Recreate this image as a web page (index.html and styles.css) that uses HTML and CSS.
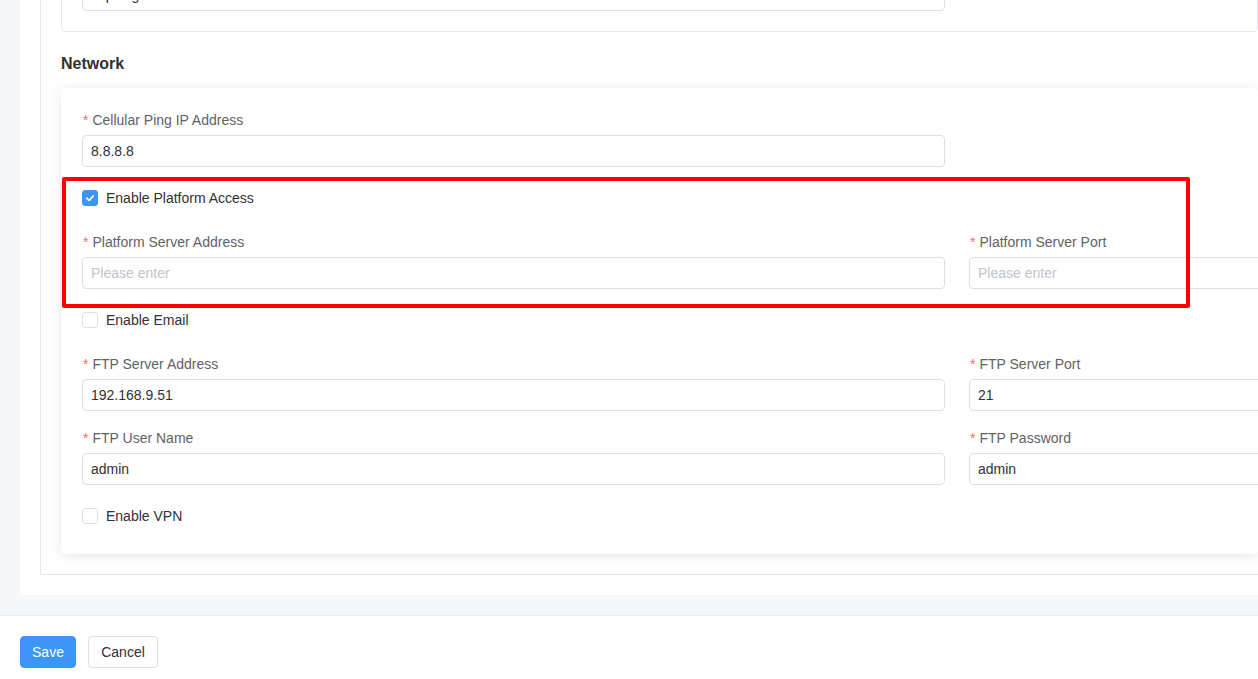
FILE: index.html
```html
<!DOCTYPE html>
<html lang="en">
<head>
<meta charset="utf-8">
<title>Network Settings</title>
<link rel="stylesheet" href="styles.css">
</head>
<body>
<div class="panel">
  <div class="container">
    <div class="card card-bordered">
      <div class="input"><span class="value">Top-Right</span></div>
    </div>

    <h3 class="section-title">Network</h3>

    <div class="card card-shadow">
      <div class="grid">
        <div class="item">
          <label class="label"><span class="req">*</span>Cellular Ping IP Address</label>
          <div class="input"><span class="value">8.8.8.8</span></div>
        </div>
        <div class="item empty"></div>

        <div class="check-row">
          <span class="checkbox checked">
            <svg viewBox="0 0 16 16" width="16" height="16"><path d="M4.2 8.2 L7 10.8 L11.8 5.6" fill="none" stroke="#fff" stroke-width="1.8" stroke-linecap="round" stroke-linejoin="round"/></svg>
          </span>
          <span class="check-label">Enable Platform Access</span>
        </div>

        <div class="item">
          <label class="label"><span class="req">*</span>Platform Server Address</label>
          <div class="input"><span class="placeholder">Please enter</span></div>
        </div>
        <div class="item">
          <label class="label"><span class="req">*</span>Platform Server Port</label>
          <div class="input"><span class="placeholder">Please enter</span></div>
        </div>

        <div class="check-row">
          <span class="checkbox"></span>
          <span class="check-label">Enable Email</span>
        </div>

        <div class="item">
          <label class="label"><span class="req">*</span>FTP Server Address</label>
          <div class="input"><span class="value">192.168.9.51</span></div>
        </div>
        <div class="item">
          <label class="label"><span class="req">*</span>FTP Server Port</label>
          <div class="input"><span class="value">21</span></div>
        </div>

        <div class="item">
          <label class="label"><span class="req">*</span>FTP User Name</label>
          <div class="input"><span class="value">admin</span></div>
        </div>
        <div class="item">
          <label class="label"><span class="req">*</span>FTP Password</label>
          <div class="input"><span class="value">admin</span></div>
        </div>

        <div class="check-row last">
          <span class="checkbox"></span>
          <span class="check-label">Enable VPN</span>
        </div>
      </div>
      <div class="highlight"></div>
    </div>
  </div>
</div>

<div class="footer">
  <button class="btn btn-primary">Save</button>
  <button class="btn btn-default">Cancel</button>
</div>
</body>
</html>
```

FILE: styles.css
```css
html, body {
  margin: 0;
  padding: 0;
}
body {
  background: #f6f7f9;
  overflow: hidden;
  width: 1258px;
  height: 679px;
  font-family: "Liberation Sans", Arial, sans-serif;
  font-size: 14px;
  color: #303133;
}

.panel {
  margin-top: -42px;
  margin-left: 20px;
  background: #fff;
  padding: 0 0 20px 20px;
}

.container {
  border-left: 1px solid #e4e7ed;
  border-bottom: 1px solid #e4e7ed;
  padding: 0 0 20px 20px;
}

.card {
  background: #fff;
  border-radius: 4px;
  box-sizing: border-box;
}
.card-bordered {
  border: 1px solid #e4e7ed;
  padding: 20px 20px 20px 20px;
}
.card-bordered .input {
  width: 863px;
}
.card-shadow {
  position: relative;
  box-shadow: 0 2px 12px 0 rgba(0, 0, 0, 0.1);
  padding: 21px 0 23px 21px;
}

.section-title {
  margin: 20px 0 12px 0;
  font-size: 16px;
  line-height: 24px;
  font-weight: bold;
  color: #303133;
}

.grid {
  display: grid;
  grid-template-columns: 863px 863px;
  column-gap: 24px;
}

.item {
  margin-bottom: 16px;
}
.label {
  display: block;
  line-height: 22px;
  margin-bottom: 4px;
  color: #606266;
  padding-left: 1px;
}
.req {
  color: #f56c6c;
  margin-right: 4px;
}

.input {
  box-sizing: border-box;
  height: 32px;
  border: 1px solid #dcdfe6;
  border-radius: 4px;
  padding: 0 8px;
  display: flex;
  align-items: center;
  background: #fff;
}
.value {
  color: #303133;
}
.placeholder {
  color: #c0c4cc;
}

.check-row {
  grid-column: 1 / 3;
  height: 30px;
  margin-bottom: 18px;
  display: flex;
  align-items: center;
  gap: 8px;
}
.check-row.last {
  margin-bottom: 0;
}
.checkbox {
  box-sizing: border-box;
  width: 16px;
  height: 16px;
  border: 1px solid #dcdfe6;
  border-radius: 3px;
  background: #fff;
  display: flex;
  align-items: center;
  justify-content: center;
}
.checkbox.checked {
  background: #3b95f7;
  border-color: #3b95f7;
}
.checkbox svg {
  display: block;
}
.check-label {
  color: #303133;
}

.highlight {
  position: absolute;
  left: 1px;
  top: 89px;
  width: 1128px;
  height: 131px;
  box-sizing: border-box;
  border: 4px solid #ff0000;
  border-radius: 2px;
  pointer-events: none;
}

.footer {
  margin-top: 20px;
  border-top: 1px solid #ebeef5;
  background: #fff;
  padding: 20px 20px 40px 20px;
  display: flex;
  gap: 12px;
}
.btn {
  height: 32px;
  padding: 0 11px;
  border-radius: 4px;
  font-family: "Liberation Sans", Arial, sans-serif;
  font-size: 14px;
  line-height: 1;
  cursor: pointer;
}
.btn-primary {
  background: #3b95f7;
  border: 1px solid #3b95f7;
  color: #fff;
  width: 56px;
}
.btn-default {
  background: #fff;
  border: 1px solid #dcdfe6;
  color: #303133;
  width: 70px;
}
```
